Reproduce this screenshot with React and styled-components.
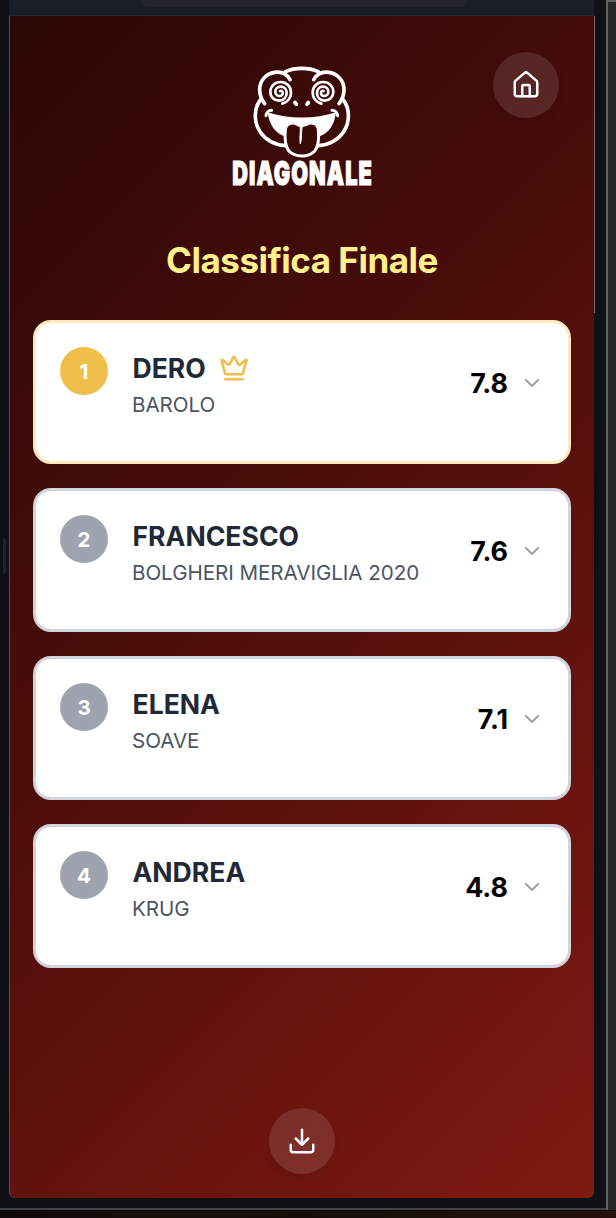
import React from "react";
import styled, { createGlobalStyle } from "styled-components";
import { House, Download, Crown, ChevronDown } from "lucide-react";

const GlobalStyle = createGlobalStyle`
  * { box-sizing: border-box; }
  body {
    margin: 0;
    overflow: hidden;
    background: #0f1116;
    font-family: Inter, "Liberation Sans", sans-serif;
  }
`;

const Window = styled.div`
  display: grid;
  grid-template-columns: 606px 10px;
  grid-template-rows: 1210px 8px;
  width: 616px;
  height: 1218px;
`;

const Frame = styled.div`
  display: grid;
  grid-template-columns: 9px 585px 12px;
  grid-template-rows: 1208px;
  background: #0f1116;
  border-bottom: 2px solid #42434a;
`;

const LeftRail = styled.div`
  display: flex;
  align-items: flex-start;
  padding: 538px 0 0 3px;
`;

const Handle = styled.div`
  width: 3px;
  height: 36px;
  border-radius: 2px;
  background: #22242c;
`;

const Gutter = styled.div`
  background: #282828;
  border-left: 2px solid #5f5f5f;
  border-top: 2px solid #5f5f5f;
`;

const Desktop = styled.div`
  grid-column: 1 / -1;
  background: linear-gradient(90deg, #0d0a0a, #1a0e0b 25%, #160c0a 50%, #20120d 80%, #280f0b);
  border-top: 1px solid #050506;
`;

const Device = styled.div`
  display: flex;
  flex-direction: column;
  height: 1198px;
`;

const AddressBar = styled.div`
  display: flex;
  justify-content: center;
  height: 16px;
  flex: none;
  background: #1a1e26;
  border-bottom: 1px solid #252a32;
`;

const AddressPill = styled.div`
  width: 327px;
  height: 7px;
  margin-left: 6px;
  border-radius: 0 0 6px 6px;
  background: #22252e;
`;

const Screen = styled.main`
  position: relative;
  display: flex;
  flex-direction: column;
  align-items: center;
  flex: 1;
  padding: 40px 23px 24px 23px;
  border-left: 1px solid #6d4545;
  border-radius: 0 0 6px 6px;
  background: linear-gradient(135deg, #2a0706 0%, #4a0d0a 42%, #801a11 100%);
`;

const ScrollThumb = styled.div`
  position: absolute;
  top: 0;
  right: -1px;
  width: 1px;
  height: 297px;
  background: #777172;
`;

const RoundButton = styled.button`
  display: flex;
  align-items: center;
  justify-content: center;
  width: 66px;
  height: 66px;
  padding: 0;
  border: 0;
  border-radius: 50%;
  color: #fff;
  background: rgba(255, 255, 255, 0.11);
  box-shadow: 0 6px 9px rgba(0, 0, 0, 0.08);
`;

const HomeButton = styled(RoundButton)`
  position: absolute;
  top: 36px;
  right: 35px;
`;

const DownloadButton = styled(RoundButton)`
  margin-top: auto;
`;

const LogoArt = styled.svg`
  display: block;
  width: 160px;
  height: 140px;
  flex: none;
  overflow: visible;
`;

const Title = styled.h1`
  margin: 37px 0 33px;
  font-size: 35px;
  line-height: 54px;
  font-weight: 700;
  letter-spacing: -0.48px;
  color: #fef08a;
`;

const Ranking = styled.ol`
  display: flex;
  flex-direction: column;
  gap: 24px;
  width: 538px;
  margin: 0;
  padding: 0;
  list-style: none;
`;

const Card = styled.li`
  display: flex;
  align-items: flex-start;
  height: 144px;
  padding: 24px;
  background: #fff;
  border: 3px solid ${(p) => (p.$first ? "#fde8c0" : "#d1d5db")};
  border-radius: 18px;
`;

const Badge = styled.span`
  display: flex;
  align-items: center;
  justify-content: center;
  width: 48px;
  height: 48px;
  margin-right: 24px;
  border-radius: 50%;
  font-size: 20.5px;
  font-weight: 700;
  color: #fff;
  background: ${(p) => (p.$first ? "#f0be4a" : "#9ea3af")};
`;

const Details = styled.div`
  flex: 1;
`;

const Name = styled.div`
  display: flex;
  align-items: center;
  gap: 13px;
  height: 42px;
  padding-left: 0.5px;
  font-size: 26.6px;
  font-weight: 700;
  color: #1f2937;
`;

const Wine = styled.div`
  padding-top: 1px;
  font-size: 20.6px;
  line-height: 30px;
  letter-spacing: -0.05px;
  color: #4b5563;
`;

const Score = styled.div`
  display: flex;
  align-items: center;
  gap: 12px;
  height: 72px;
  font-size: 26.8px;
  font-weight: 700;
  color: #000;
`;

const entries = [
  { name: "DERO", wine: "BAROLO", score: "7.8" },
  { name: "FRANCESCO", wine: "BOLGHERI MERAVIGLIA 2020", score: "7.6" },
  { name: "ELENA", wine: "SOAVE", score: "7.1" },
  { name: "ANDREA", wine: "KRUG", score: "4.8" },
];

function FrogHalf() {
  return (
    <g fill="none" stroke="#fff" strokeWidth="11" strokeLinecap="round" strokeLinejoin="round">
      <path d="M204 71C194 52 177 46 158 49C131 53 112 75 113 103C114 120 119 132 128 143" />
      <path d="M115 132C95 157 95 199 114 227C131 252 158 266 190 269" />
      <path
        strokeWidth="8"
        d="M181 143C196 140 207 126 207 110C207 91 193 78 176 78C158 78 145 91 145 108C145 123 157 134 172 134C185 134 194 124 194 111C194 99 186 92 176 92C166 92 160 99 160 107C160 115 166 120 173 120C179 120 183 115 182 109C181 105 177 103 174 105"
      />
      <path strokeWidth="9" d="M132 179C133 170 140 163 149 163" />
    </g>
  );
}

function Logo() {
  return (
    <LogoArt viewBox="0 0 480 420" role="img" aria-label="Diagonale">
      <path d="M190 47C219 34 260 34 289 47" fill="none" stroke="#fff" strokeWidth="11" strokeLinecap="round" />
      <FrogHalf />
      <g transform="matrix(-1 0 0 1 479 0)">
        <FrogHalf />
      </g>
      <ellipse cx="221" cy="142" rx="6" ry="9" transform="rotate(-35 221 142)" fill="#fff" />
      <ellipse cx="257" cy="142" rx="6" ry="9" transform="rotate(35 257 142)" fill="#fff" />
      <path
        fill="#fff"
        d="M137 169C198 190 281 190 342 169C338 205 320 233 292 241L289 220C286 205 273 199 260 203L240 213L220 203C206 199 193 206 190 221L187 241C160 232 141 205 137 169Z"
      />
      <path
        d="M190 222C191 203 211 196 225 205C232 210 246 210 254 205C269 196 288 203 289 222C291 244 292 266 279 284C260 305 220 305 200 284C187 266 188 244 190 222Z"
        fill="#3a0908"
        stroke="#fff"
        strokeWidth="9"
      />
      <path d="M232 206C239 216 231 240 235 264C242 241 235 221 244 206Z" fill="#fff" stroke="#fff" strokeWidth="3" />
      <text
        transform="translate(31 387) scale(0.62 1)"
        fontFamily="Inter, sans-serif"
        fontSize="100"
        fontWeight="900"
        letterSpacing="5"
        fill="#fff"
        stroke="#fff"
        strokeWidth="3.5"
        textLength="680"
        lengthAdjust="spacingAndGlyphs"
      >
        DIAGONALE
      </text>
    </LogoArt>
  );
}

function RankingCard({ entry, position }) {
  const first = position === 1;
  return (
    <Card $first={first}>
      <Badge $first={first}>{position}</Badge>
      <Details>
        <Name>
          {entry.name}
          {first && <Crown size={30} color="#f0be4a" />}
        </Name>
        <Wine>{entry.wine}</Wine>
      </Details>
      <Score>
        {entry.score}
        <ChevronDown size={24} color="#9ca3af" />
      </Score>
    </Card>
  );
}

export default function App() {
  return (
    <>
      <GlobalStyle />
      <Window>
        <Frame>
          <LeftRail>
            <Handle />
          </LeftRail>
          <Device>
            <AddressBar>
              <AddressPill />
            </AddressBar>
            <Screen>
              <ScrollThumb />
              <HomeButton aria-label="Home">
                <House size={30} />
              </HomeButton>
              <Logo />
              <Title>Classifica Finale</Title>
              <Ranking>
                {entries.map((entry, i) => (
                  <RankingCard key={entry.name} entry={entry} position={i + 1} />
                ))}
              </Ranking>
              <DownloadButton aria-label="Download">
                <Download size={30} />
              </DownloadButton>
            </Screen>
          </Device>
        </Frame>
        <Gutter />
        <Desktop />
      </Window>
    </>
  );
}
